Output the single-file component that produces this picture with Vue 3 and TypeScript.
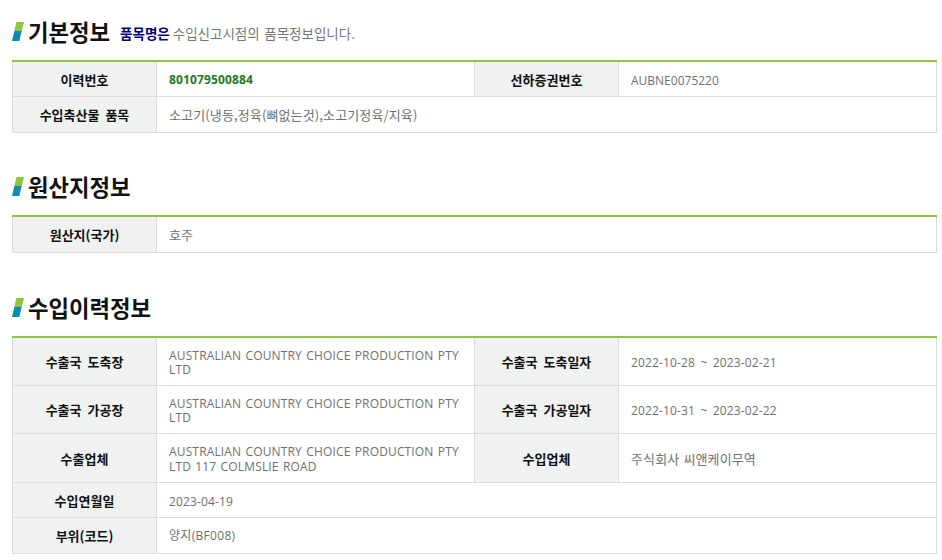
<script setup lang="ts">
interface Cell { label: string; value: string; wide?: boolean; kind?: string }
interface Section { title: string; note?: [string, string]; rows: Cell[][] }

const acc = 'AUSTRALIAN COUNTRY CHOICE PRODUCTION PTY LTD'
const sections: Section[] = [
  {
    title: '기본정보',
    note: ['품목명은', '수입신고시점의 품목정보입니다.'],
    rows: [
      [{ label: '이력번호', value: '801079500884', kind: 'green' }, { label: '선하증권번호', value: 'AUBNE0075220', kind: 'code' }],
      [{ label: '수입축산물 품목', value: '소고기(냉동,정육(뼈없는것),소고기정육/지육)', wide: true, kind: 'ko' }],
    ],
  },
  {
    title: '원산지정보',
    rows: [[{ label: '원산지(국가)', value: '호주', wide: true, kind: 'ko' }]],
  },
  {
    title: '수입이력정보',
    rows: [
      [{ label: '수출국 도축장', value: acc }, { label: '수출국 도축일자', value: '2022-10-28 ~ 2023-02-21', kind: 'date' }],
      [{ label: '수출국 가공장', value: acc }, { label: '수출국 가공일자', value: '2022-10-31 ~ 2023-02-22', kind: 'date' }],
      [{ label: '수출업체', value: acc + ' 117 COLMSLIE ROAD' }, { label: '수입업체', value: '주식회사 씨앤케이무역', kind: 'ko' }],
      [{ label: '수입연월일', value: '2023-04-19', wide: true, kind: 'date' }],
      [{ label: '부위(코드)', value: '양지(BF008)', wide: true, kind: 'mix' }],
    ],
  },
]
</script>

<template>
  <main class="page">
    <section v-for="s in sections" :key="s.title" class="section">
      <header class="head">
        <svg class="mark" width="12" height="19" viewBox="0 0 12 19" aria-hidden="true">
          <polygon points="4.4,0 12,0 9.6,9.5 2.2,9.5" fill="#8cc63f" />
          <polygon points="2.4,9 9.7,9 7.3,19 0,19" fill="#0b8cb0" />
        </svg>
        <h2 class="title">{{ s.title }}</h2>
        <p v-if="s.note" class="note"><b>{{ s.note[0] }}</b> {{ s.note[1] }}</p>
      </header>
      <table class="info">
        <colgroup>
          <col class="c-label" /><col class="c-val" /><col class="c-label" /><col />
        </colgroup>
        <tbody>
          <tr v-for="(row, i) in s.rows" :key="i" :class="row.length > 1 && s.rows.length > 2 ? 'tall' : 'short'">
            <template v-for="c in row" :key="c.label">
              <th>{{ c.label }}</th>
              <td :colspan="c.wide ? 3 : 1" :class="c.kind">{{ c.value }}</td>
            </template>
          </tr>
        </tbody>
      </table>
    </section>
  </main>
</template>

<style>
html, body { margin: 0; background: #fff; }
</style>

<style scoped>
.page {
  width: 925px;
  padding: 17px 0 0 12px;
  font-family: "Open Sans", "Noto Sans CJK KR", sans-serif;
  font-size: 12px;
}
.section + .section { margin-top: 39px; }
.section + .section + .section { margin-top: 40px; }
.head {
  display: flex;
  align-items: center;
  height: 28px;
  margin-bottom: 15px;
}
.mark { flex: none; margin-top: 1px; }
.title {
  margin: 0 0 0 4px;
  font-family: "Noto Sans CJK KR", sans-serif;
  font-size: 22.3px;
  font-weight: 700;
  line-height: 28px;
  color: #111;
}
.note {
  margin: 3px 0 0 10px;
  font-family: "Noto Sans CJK KR", sans-serif;
  font-size: 13.5px;
  word-spacing: 1.5px;
  color: #777;
}
.note b { color: #000080; font-weight: 700; margin-right: -1.5px; }
.info {
  width: 925px;
  table-layout: fixed;
  border-collapse: collapse;
  border-top: 2px solid #8cc63f;
}
.c-label { width: 144px; }
.c-val { width: 318px; }
.short { height: 35.5px; }
.short:only-child { height: 36.5px; }
.tall { height: 48.5px; }
th, td {
  border: 1px solid #dcdcdc;
  padding: 2px 12px 0;
  box-sizing: border-box;
  line-height: 14.4px;
}
.info tr:first-child th, .info tr:first-child td { border-top: 0; }
th {
  background: #f0f2f2;
  font-family: "Noto Sans CJK KR", sans-serif;
  font-size: 13px;
  font-weight: 700;
  word-spacing: 3px;
  color: #111;
  text-align: center;
}
td { padding-top: 4px; color: #707070; text-align: left; letter-spacing: 0.15px; word-spacing: 1px; }
td.green { color: #1f7a1f; font-weight: 700; padding-top: 3px; }
td.code { letter-spacing: 0; }
td.date { word-spacing: 2px; }
td.ko {
  padding-top: 2px;
  font-family: "Noto Sans CJK KR", sans-serif;
  font-size: 13px;
  letter-spacing: 0.13px;
}
td.mix { padding-top: 2px; letter-spacing: 0.3px; }
</style>
